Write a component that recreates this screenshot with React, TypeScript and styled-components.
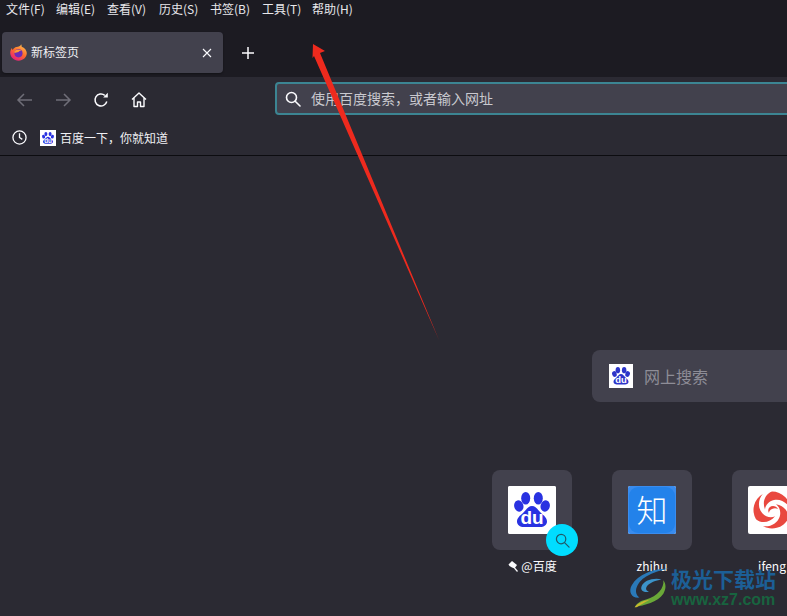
import React from "react";
import styled, { createGlobalStyle } from "styled-components";

const Global = createGlobalStyle`
  html, body { margin: 0; padding: 0; background: #2b2a33; }
  #root { width: 787px; height: 616px; overflow: hidden; }
  * { box-sizing: border-box; }
`;
const FONT = `"Noto Sans CJK SC", "Liberation Sans", sans-serif`;

const Page = styled.div`
  position: relative;
  width: 787px;
  height: 616px;
  overflow: hidden;
  background: #2b2a33;
  font-family: ${FONT};
  color: #fbfbfe;
  display: flex;
  flex-direction: column;
`;
const Chrome = styled.div`
  background: #1c1b22;
  flex: none;
`;
const MenuBar = styled.div`
  display: flex;
  height: 17px;
  padding-left: 6px;
  gap: 11px;
  align-items: center;
`;
const MenuItem = styled.span<{ $w: number }>`
  font-size: 12px;
  line-height: 17px;
  color: #e8e8ec;
  white-space: nowrap;
  width: ${(p) => p.$w}px;
`;
const TabStrip = styled.div`
  display: flex;
  align-items: center;
  height: 60px;
  padding: 15px 0 4px 2px;
`;
const Tab = styled.div`
  width: 221px;
  height: 41px;
  background: #42414d;
  border-radius: 4px;
  display: flex;
  align-items: center;
  padding: 0 10px 0 8px;
  gap: 4px;
  box-shadow: 0 1px 2px rgba(0, 0, 0, 0.35);
`;
const TabTitle = styled.span`
  flex: 1;
  font-size: 12px;
  line-height: 16px;
  margin-top: -2px;
  color: #f0f0f4;
`;
const IconBtn = styled.button<{ $dim?: boolean }>`
  padding: 0;
  border: 0;
  background: none;
  width: 18px;
  display: flex;
  align-items: center;
  justify-content: center;
  color: ${(p) => (p.$dim ? "#6f6e78" : "#fbfbfe")};
`;
const CloseBtn = styled(IconBtn)`
  width: 12px;
`;
const NewTab = styled(IconBtn)`
  margin-left: 16px;
`;
const NavBar = styled.div`
  height: 45px;
  background: #2b2a33;
  display: flex;
  align-items: center;
  padding-left: 16px;
  flex: none;
`;
const NavIcons = styled.div`
  display: flex;
  align-items: center;
  gap: 20px;
  width: 259px;
  flex: none;
  margin-top: 1px;
`;
const UrlBar = styled.div`
  width: 540px;
  height: 33px;
  margin-top: -2px;
  flex: none;
  background: #42414d;
  border: 2px solid #3c8593;
  border-radius: 4px;
  display: flex;
  align-items: center;
  padding-left: 8px;
  gap: 10px;
`;
const UrlText = styled.span`
  font-size: 14px;
  line-height: 18px;
  margin-top: -1px;
  color: #c9c9cf;
`;
const Bookmarks = styled.div`
  height: 34px;
  flex: none;
  display: flex;
  align-items: center;
  padding: 0 0 2px 12px;
  border-bottom: 1px solid #0c0c10;
`;
const BookmarkItem = styled.div`
  display: flex;
  align-items: center;
  margin-left: 13px;
  gap: 4px;
  font-size: 12px;
  color: #f0f0f4;
`;
const Content = styled.main`
  flex: 1;
  background: #2b2a33;
  padding-top: 194px;
`;
const SearchBox = styled.div`
  margin-left: 592px;
  width: 400px;
  height: 52px;
  background: #42414d;
  border-radius: 8px;
  display: flex;
  align-items: center;
  padding-left: 17px;
  gap: 11px;
`;
const SearchHint = styled.span`
  font-size: 16px;
  color: #8e8d97;
`;
const Tiles = styled.div`
  display: flex;
  margin: 68px 0 0 492px;
  gap: 40px;
  width: 600px;
`;
const TileWrap = styled.div`
  width: 80px;
  flex: none;
  display: flex;
  flex-direction: column;
  align-items: center;
`;
const TileBox = styled.div`
  position: relative;
  width: 80px;
  height: 80px;
  background: #42414d;
  border-radius: 8px;
  display: flex;
  align-items: center;
  justify-content: center;
`;
const Favicon = styled.div`
  width: 48px;
  height: 48px;
  border-radius: 2px;
  overflow: hidden;
  background: #fff;
  display: flex;
  align-items: center;
  justify-content: center;
`;
const Badge = styled.div`
  position: absolute;
  right: -6px;
  bottom: -6px;
  width: 32px;
  height: 32px;
  border-radius: 50%;
  background: #00ddff;
  display: flex;
  align-items: center;
  justify-content: center;
  color: #1f5a68;
`;
const TileLabel = styled.div`
  margin-top: 7px;
  font-size: 12px;
  line-height: 17px;
  color: #fbfbfe;
  display: flex;
  align-items: center;
  gap: 2px;
  white-space: nowrap;
`;
const ArrowOverlay = styled.svg`
  position: absolute;
  left: 0;
  top: 0;
  pointer-events: none;
`;
const Watermark = styled.div`
  position: absolute;
  left: 626px;
  top: 563px;
  width: 161px;
  height: 50px;
  pointer-events: none;
`;
const MarkLogo = styled.svg`
  position: absolute;
  left: 0;
  top: 3px;
`;
const MarkTitle = styled.div`
  position: absolute;
  left: 45px;
  top: 0;
  font-size: 21px;
  line-height: 30px;
  font-weight: 700;
  color: #1c5f96;
  white-space: nowrap;
`;
const MarkUrl = styled.div`
  position: absolute;
  left: 45px;
  top: 28px;
  font-family: "Liberation Sans", sans-serif;
  font-size: 16px;
  line-height: 18px;
  font-weight: 700;
  color: #18633f;
  white-space: nowrap;
`;

const BaiduPaw = ({ size, color = "#2932e1" }: { size: number; color?: string }) => (
  <svg width={size} height={size} viewBox="0 0 48 48">
    <rect width="48" height="48" fill="#fff" />
    <ellipse cx="17.700" cy="12.300" rx="4.500" ry="6.300" fill={color} />
    <ellipse cx="30.300" cy="12.300" rx="4.500" ry="6.300" fill={color} />
    <ellipse cx="10.800" cy="20" rx="4.600" ry="5.800" fill={color} transform="rotate(-15 10.800 20)" />
    <ellipse cx="37.200" cy="20" rx="4.600" ry="5.800" fill={color} transform="rotate(15 37.200 20)" />
    <path
      d="M24 20c-4 0-6 4-9 7-3 2.500-6 5-6 8.500C9 39 12 41 16 41h16c4 0 7-2 7-5.500 0-3.500-3-6-6-8.500-3-3-5-7-9-7z"
      fill={color}
    />
    <text x="24" y="38" textAnchor="middle" fontSize="19" fontWeight="700" fill="#fff" fontFamily="Liberation Sans, sans-serif">du</text>
  </svg>
);

const Firefox = () => (
  <svg width="17" height="17" viewBox="0 0 16 16">
    <defs>
      <linearGradient id="ffo" x1="0.8" y1="0" x2="0.2" y2="1">
        <stop offset="0" stopColor="#ffc14f" />
        <stop offset="0.5" stopColor="#ff6a2b" />
        <stop offset="1" stopColor="#e31587" />
      </linearGradient>
    </defs>
    <path
      d="M10.500.2c.6 1.400.5 2.300.5 2.300 2.800 1.100 4.800 3.400 4.800 6 0 4-3.500 7.200-7.800 7.200S.2 12.500.2 8.300C.2 6.600.8 5 1.800 3.800c.1.900.4 1.400.8 1.800C3.300 4 4.800 3 6 2.800 8 2.400 10 2 10.500.2z"
      fill="url(#ffo)"
    />
    <circle cx="8" cy="8.800" r="3.800" fill="#6e2bb5" />
    <path d="M4.200 6.800C6 5 9 5 11 6.300c-1.500 0-2.600.4-3 1.300L4.200 8.500z" fill="#ff9a36" />
  </svg>
);

const Lens = ({ size = 16, sw = 1.6 }: { size?: number; sw?: number }) => (
  <svg width={size} height={size} viewBox="0 0 16 16" fill="none" stroke="currentColor" strokeWidth={sw} strokeLinecap="round">
    <circle cx="6.500" cy="6.500" r="5" />
    <path d="M10.200 10.200 15 15" />
  </svg>
);

const IFENG_BLADE = "M24 5.500A18.500 18.500 0 0 1 42.500 24C40 17 33 12.500 26 14c-5 1-8.500 5-9 9.500C14 16 17 8 24 5.500z";

const menus: [string, number][] = [
  ["文件(F)", 39],
  ["编辑(E)", 40],
  ["查看(V)", 41],
  ["历史(S)", 40],
  ["书签(B)", 41],
  ["工具(T)", 39],
  ["帮助(H)", 42],
];

export default function App() {
  return (
    <Page>
      <Global />
      <Chrome>
        <MenuBar>
          {menus.map(([m, w]) => (
            <MenuItem key={m} $w={w}>{m}</MenuItem>
          ))}
        </MenuBar>
        <TabStrip>
          <Tab>
            <Firefox />
            <TabTitle>新标签页</TabTitle>
            <CloseBtn aria-label="关闭">
              <svg width="12" height="12" viewBox="0 0 12 12" stroke="currentColor" strokeWidth="1.100">
                <path d="M2 2l8 8M10 2l-8 8" />
              </svg>
            </CloseBtn>
          </Tab>
          <NewTab aria-label="新建">
            <svg width="14" height="14" viewBox="0 0 14 14" stroke="currentColor" strokeWidth="1.500">
              <path d="M7 1v12M1 7h12" />
            </svg>
          </NewTab>
        </TabStrip>
      </Chrome>
      <NavBar>
        <NavIcons>
          <IconBtn $dim aria-label="后退">
            <svg width="18" height="16" viewBox="0 0 18 16" fill="none" stroke="currentColor" strokeWidth="1.500">
              <path d="M16 8H2M8 2 2 8l6 6" />
            </svg>
          </IconBtn>
          <IconBtn $dim aria-label="前进">
            <svg width="18" height="16" viewBox="0 0 18 16" fill="none" stroke="currentColor" strokeWidth="1.500">
              <path d="M2 8h14M10 2l6 6-6 6" />
            </svg>
          </IconBtn>
          <IconBtn aria-label="刷新">
            <svg width="16" height="16" viewBox="0 0 16 16" fill="none" stroke="currentColor" strokeWidth="1.500">
              <path d="M13.800 9.500A6 6 0 1 1 11.800 3.300" />
              <path d="M14.800.8v4.600h-4.600z" fill="currentColor" stroke="none" />
            </svg>
          </IconBtn>
          <IconBtn aria-label="主页">
            <svg width="16" height="16" viewBox="0 0 16 16" fill="none" stroke="currentColor" strokeWidth="1.400" strokeLinejoin="round">
              <path d="M1 7.500 8 1l7 6.500M3 6v8.500h3.500V10h3v4.500H13V6" />
            </svg>
          </IconBtn>
        </NavIcons>
        <UrlBar>
          <Lens />
          <UrlText>使用百度搜索，或者输入网址</UrlText>
        </UrlBar>
      </NavBar>
      <Bookmarks>
        <svg width="15" height="15" viewBox="0 0 16 16" fill="none" stroke="#fbfbfe" strokeWidth="1.400">
          <circle cx="8" cy="8" r="7" />
          <path d="M8 3.500V8l3 2" />
        </svg>
        <BookmarkItem>
          <BaiduPaw size={16} />
          <span>百度一下，你就知道</span>
        </BookmarkItem>
      </Bookmarks>
      <Content>
        <SearchBox>
          <BaiduPaw size={24} color="#2d35c9" />
          <SearchHint>网上搜索</SearchHint>
        </SearchBox>
        <Tiles>
          <TileWrap>
            <TileBox>
              <Favicon><BaiduPaw size={48} /></Favicon>
              <Badge><Lens size={15} sw={1.300} /></Badge>
            </TileBox>
            <TileLabel>
              <svg width="12" height="12" viewBox="0 0 12 12" fill="#fbfbfe">
                <path d="M5 1 10 5 7.500 8.500 5 7.500 2.500 6 1.500 4.500z" />
                <path d="M7.500 8 10.500 11.500" stroke="#fbfbfe" strokeWidth="1.200" />
              </svg>
              @百度
            </TileLabel>
          </TileWrap>
          <TileWrap>
            <TileBox>
              <Favicon>
                <svg width="48" height="48" viewBox="0 0 48 48">
                  <rect width="48" height="48" fill="#3a8cee" />
                  <rect x="1" y="1" width="46" height="46" rx="9" fill="#2382ea" />
                  <text x="24" y="35.500" textAnchor="middle" fontSize="31" fontWeight="300" fill="#fff" fontFamily={FONT}>知</text>
                </svg>
              </Favicon>
            </TileBox>
            <TileLabel>zhihu</TileLabel>
          </TileWrap>
          <TileWrap>
            <TileBox>
              <Favicon>
                <svg width="48" height="48" viewBox="0 0 48 48" fill="#e9483f">
                  <path d={IFENG_BLADE} />
                  <path d={IFENG_BLADE} transform="rotate(120 24 24)" />
                  <path d={IFENG_BLADE} transform="rotate(240 24 24)" />
                  <path d="M21 27c-2-3 0-7 4-7 2 0 4 1 5 3-2-1-4-1-6 0-2 1-3 2-3 4z" />
                </svg>
              </Favicon>
            </TileBox>
            <TileLabel>ifeng</TileLabel>
          </TileWrap>
        </Tiles>
      </Content>

      <ArrowOverlay width="787" height="616" viewBox="0 0 787 616">
        <path d="M313 44 325 51 320 53 439 340 314 56 312.500 58z" fill="#ee2a1e" />
      </ArrowOverlay>

      <Watermark>
        <MarkLogo width="46" height="44" viewBox="0 0 46 46" fill="none">
          <path d="M44 3C30 2 12 8 5 20c-4 7 0 14 8 13C6 28 10 17 20 11 27 7 36 4 44 3z" fill="#2a79b8" />
          <path d="M36 14c-8-2-19 1-21 8-1 4 3 6 8 5-3-1-4-3-2-6 3-4 9-6 15-7z" fill="#3c93c9" />
          <path d="M38 15c1 8-6 17-18 20-5 1-9 3-12 8 10-2 24-5 30-14 3-5 3-10 0-14z" fill="#6aa838" />
          <path d="M8 43c4-5 10-7 16-8-6 3-10 6-14 8z" fill="#c9b72e" />
        </MarkLogo>
        <MarkTitle>极光下载站</MarkTitle>
        <MarkUrl>www.xz7.com</MarkUrl>
      </Watermark>
    </Page>
  );
}
